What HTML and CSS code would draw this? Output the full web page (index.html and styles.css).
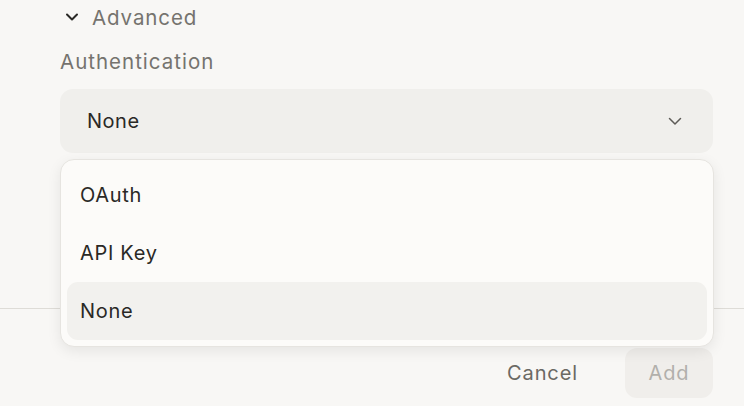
FILE: index.html
```html
<!DOCTYPE html>
<html>
<head>
<meta charset="utf-8">
<link rel="stylesheet" href="styles.css">
</head>
<body>
<div class="dialog">
  <div class="content">
    <div class="advanced">
      <svg class="adv-icon" width="16" height="16" viewBox="0 0 16 16"><path d="M3 5.5 L8 10.5 L13 5.5" fill="none" stroke="#2a2926" stroke-width="2" stroke-linecap="round" stroke-linejoin="round"/></svg>
      <span>Advanced</span>
    </div>
    <div class="label">Authentication</div>
    <div class="select">
      <span>None</span>
      <svg width="14" height="14" viewBox="0 0 14 14"><path d="M1.5 4.5 L7 10 L12.5 4.5" fill="none" stroke="#5d5b57" stroke-width="1.5" stroke-linecap="round" stroke-linejoin="round"/></svg>
    </div>
  </div>
  <div class="footer">
    <button class="btn cancel">Cancel</button>
    <button class="btn add">Add</button>
  </div>
  <div class="menu">
    <div class="item">OAuth</div>
    <div class="item">API Key</div>
    <div class="item active">None</div>
  </div>
</div>
</body>
</html>
```
FILE: styles.css
```css
html, body {
  margin: 0;
  padding: 0;
  background: #f8f7f5;
  font-family: Inter, "Noto Sans", sans-serif;
  color: #2a2926;
  letter-spacing: 0.7px;
}
.dialog {
  position: relative;
  width: 744px;
  height: 406px;
  overflow: hidden;
}
.content {
  height: 309px;
  box-sizing: border-box;
  border-bottom: 1px solid #dedcd7;
  padding: 5px 31px 0 60px;
}
.advanced {
  display: flex;
  align-items: center;
  gap: 12px;
  padding-left: 4px;
  height: 24px;
  font-size: 20.5px;
  letter-spacing: 0.9px;
  color: #75736e;
}
.label {
  margin-top: 21px;
  height: 24px;
  line-height: 24px;
  font-size: 20.5px;
  color: #75736e;
  letter-spacing: 1px;
}
.select {
  margin-top: 15px;
  height: 64px;
  border-radius: 13px;
  background: #f0efec;
  display: flex;
  align-items: center;
  justify-content: space-between;
  padding: 0 31px 0 27px;
  font-size: 20px;
  color: #2a2926;
  letter-spacing: 0.5px;
}
.footer {
  display: flex;
  justify-content: flex-end;
  gap: 24px;
  padding: 39px 31px 0 0;
}
.btn {
  height: 50px;
  border: none;
  border-radius: 12px;
  font-family: Inter, "Noto Sans", sans-serif;
  font-size: 20px;
  letter-spacing: 0.9px;
  padding: 0 23px;
  background: transparent;
}
.cancel {
  color: #6b6964;
}
.add {
  width: 88px;
  padding: 0;
  background: #f0eeeb;
  color: #b2b0ab;
}
.menu {
  position: absolute;
  left: 60px;
  top: 159px;
  width: 654px;
  box-sizing: border-box;
  padding: 6px 6px;
  background: #fcfbf9;
  border: 1px solid #e6e4e0;
  border-radius: 14px;
  box-shadow: 0 4px 14px rgba(0, 0, 0, 0.08);
}
.item {
  height: 58px;
  display: flex;
  align-items: center;
  padding-left: 13px;
  font-size: 20px;
  color: #2a2926;
  border-radius: 11px;
}
.item.active {
  background: #f2f1ee;
}
```
